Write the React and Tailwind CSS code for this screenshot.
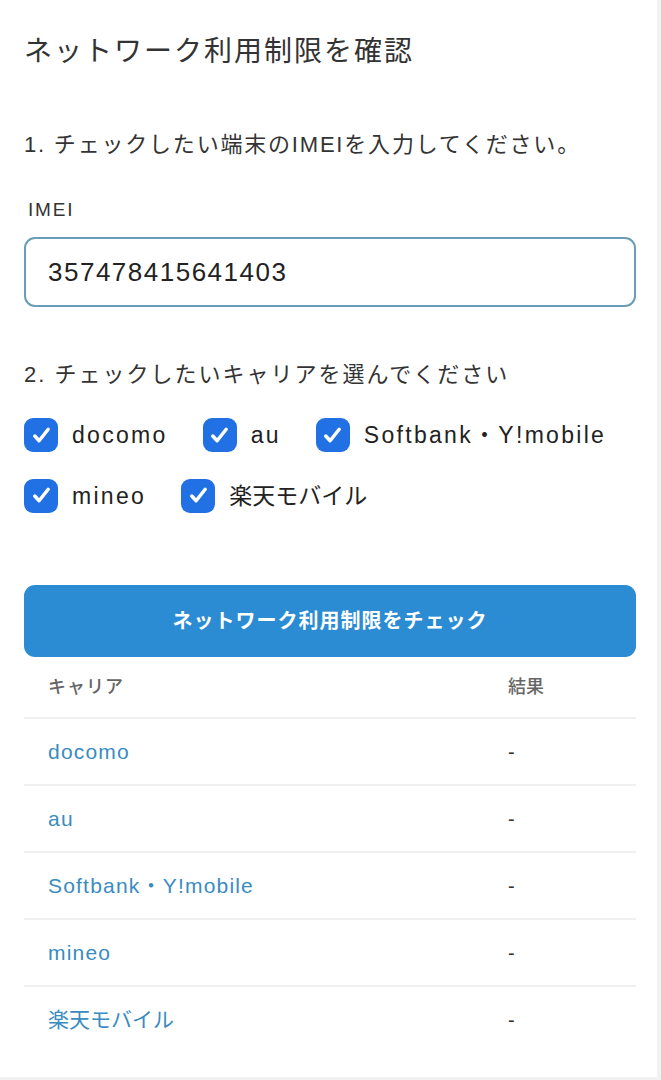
import { useState } from "react";

const CARRIERS = ["docomo", "au", "Softbank・Y!mobile", "mineo", "楽天モバイル"];
const FONT = { fontFamily: '"Liberation Sans", "Noto Sans CJK JP", sans-serif' };

// ラテン文字のラベルは参照画像の方が字間が広い
const isLatin = (s) => !s.startsWith("楽天");

function Check({ label, checked, onToggle }) {
  return (
    <label className="flex items-center gap-[14px] cursor-pointer select-none" onClick={onToggle}>
      <span className={`flex h-[34px] w-[34px] items-center justify-center rounded-[9px] ${checked ? "bg-[#2170e4]" : "border-2 border-[#aaa] bg-white"}`}>
        {checked && (
          <svg viewBox="0 0 24 24" className="h-[23px] w-[23px]" fill="none" stroke="white" strokeWidth="3.6" strokeLinecap="round" strokeLinejoin="round">
            <path d="M5 12.5l4.5 5L19 5.5" />
          </svg>
        )}
      </span>
      <span className={`text-[23px] text-[#222] ${isLatin(label) ? "tracking-[2.3px]" : ""}`}>{label}</span>
    </label>
  );
}

export default function App() {
  const [checked, setChecked] = useState(() => Object.fromEntries(CARRIERS.map((c) => [c, true])));
  const toggle = (c) => setChecked((s) => ({ ...s, [c]: !s[c] }));

  return (
    <div className="min-h-[1080px] bg-[#f2f2f2]" style={FONT}>
      <div className="w-[657px] h-[1077px] bg-white pl-6 pr-[21px] pt-[32px] text-[#333]">
        <h1 className="text-[28px] leading-[40px] tracking-[2px]">ネットワーク利用制限を確認</h1>

        <p className="mt-[57px] text-[22px] leading-[32px] tracking-[1.8px]">1. チェックしたい端末のIMEIを入力してください。</p>

        <div className="mt-[36px] pl-1 text-[19px] leading-[26px] tracking-[1.8px]">IMEI</div>
        <div className="mt-[14px] flex h-[70px] items-center rounded-[11px] border-2 border-[#6a9db6] px-[22px] text-[26px] tracking-[1.5px] text-[#222]">
          357478415641403
        </div>

        <p className="mt-[52px] text-[22px] leading-[32px] tracking-[2px]">2. チェックしたいキャリアを選んでください</p>

        <div className="mt-[27px] flex flex-col gap-[26px]">
          <div className="flex gap-[35px]">
            {CARRIERS.slice(0, 3).map((c) => (
              <Check key={c} label={c} checked={checked[c]} onToggle={() => toggle(c)} />
            ))}
          </div>
          <div className="flex gap-[35px]">
            {CARRIERS.slice(3).map((c) => (
              <Check key={c} label={c} checked={checked[c]} onToggle={() => toggle(c)} />
            ))}
          </div>
        </div>

        <button className="mt-[72px] flex h-[72px] w-full items-center justify-center rounded-[11px] bg-[#2b8bd3] text-[20px] font-bold tracking-[1px] text-white">
          ネットワーク利用制限をチェック
        </button>

        <table className="w-full border-collapse">
          <thead>
            <tr className="h-[61px] border-b-2 border-[#f0f0f0] text-left text-[18px] text-[#666]">
              <th className="pl-6 font-medium tracking-[1px]">キャリア</th>
              <th className="w-[128px] font-medium">結果</th>
            </tr>
          </thead>
          <tbody>
            {CARRIERS.map((c, i) => (
              <tr key={c} className={`h-[67px] ${i < CARRIERS.length - 1 ? "border-b-2 border-[#f0f0f0]" : ""}`}>
                <td className={`pl-6 text-[21px] text-[#3a8cc0] ${isLatin(c) ? "tracking-[1.2px]" : ""}`}>{c}</td>
                <td className="text-[20px] text-[#333]">-</td>
              </tr>
            ))}
          </tbody>
        </table>
      </div>
    </div>
  );
}
